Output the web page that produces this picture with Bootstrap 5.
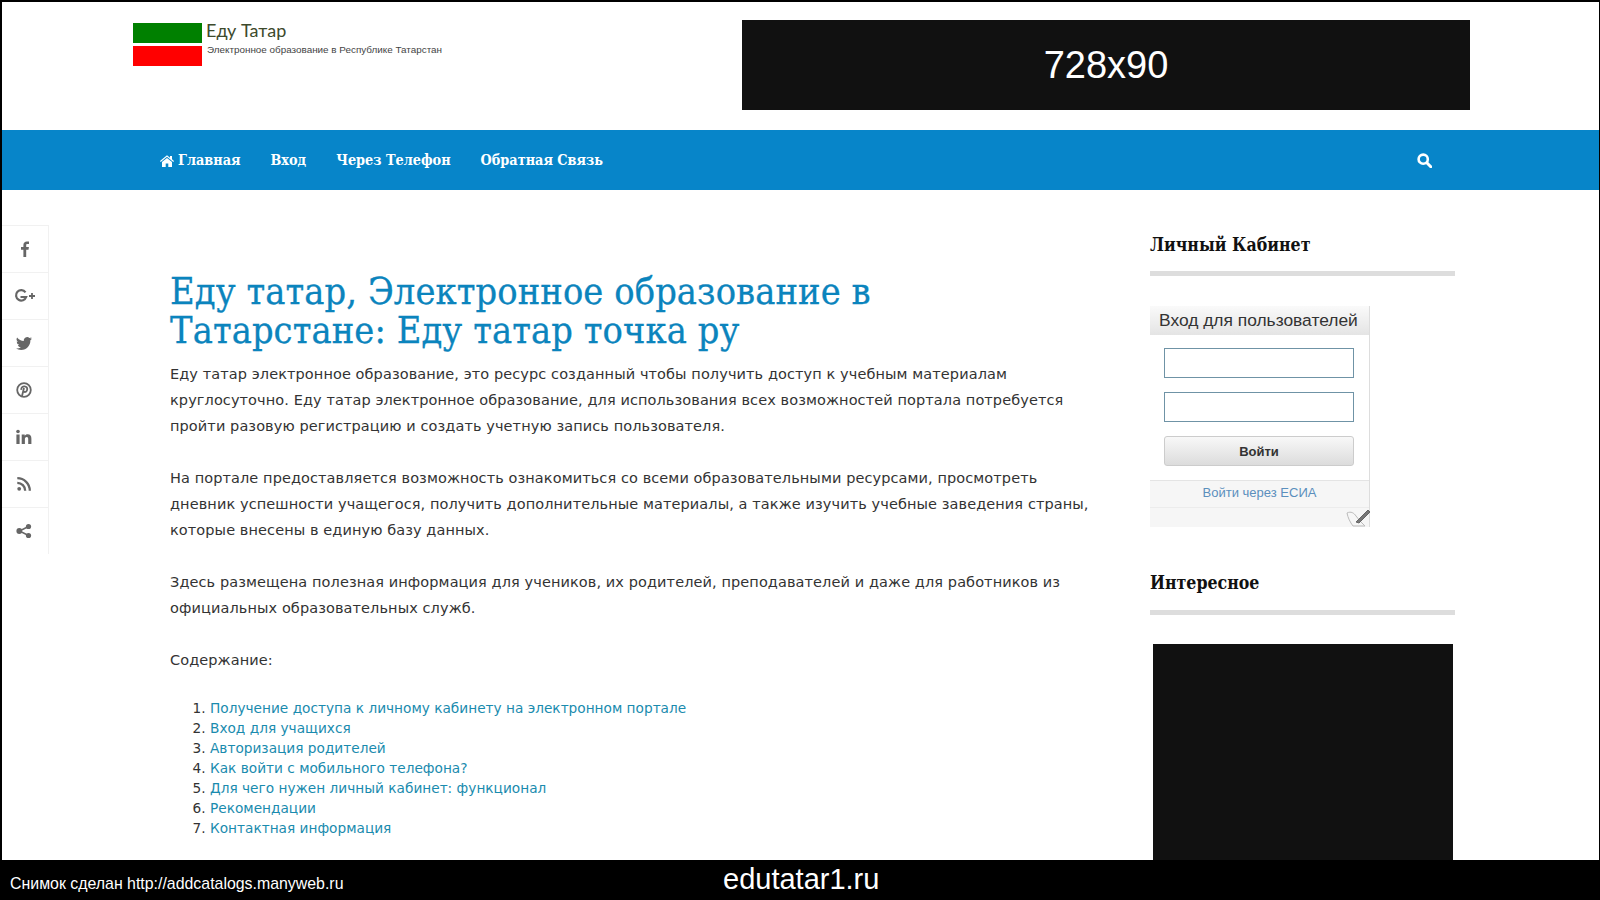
<!DOCTYPE html>
<html lang="ru">
<head>
  <meta charset="UTF-8" />
  <title>Еду Татар</title>
  <meta name="viewport" content="width=device-width, initial-scale=1" />
  <link href="https://cdn.jsdelivr.net/npm/bootstrap@5.3.0/dist/css/bootstrap.min.css" rel="stylesheet"/>
  <style>
    html, body { height: 100%; overflow: hidden; }
    body { background: #000; font-family: "DejaVu Sans", sans-serif; color: #333; }

    .shot-frame { width: 1600px; height: 900px; background: #fff; border-top: 2px solid #000; border-left: 2px solid #000; border-right: 1px solid #000; }
    .slab { font-family: "DejaVu Serif Condensed", "DejaVu Serif", serif; }

    /* шапка */
    .top-head { height: 128px; padding: 18px 129px 0 131px; }
    .flag-logo { width: 69px; height: 43px; margin-top: 3px; background: linear-gradient(#008000 0 20px, #fff 20px 23px, #f00 23px); }
    .logo-title { font-family: Lato, sans-serif; font-size: 18px; line-height: 21px; color: #3d4a2c; margin-left: 4px; }
    .logo-sub { font-family: "Liberation Sans", sans-serif; font-size: 9.9px; line-height: 12px; color: #444; margin: 3px 0 0 5px; }
    .ad-top { width: 728px; height: 90px; background: #111; color: #fff; font-family: "Liberation Sans", sans-serif; font-size: 38px; }

    /* меню */
    .main-menu { height: 60px; background: #0785c9; padding: 1px 167px 0 158px; }
    .main-menu a { color: #fff; font-weight: 700; font-size: 14.3px; text-decoration: none; }
    .menu-gap { gap: 30px; }

    /* контент */
    .page-body { min-height: 0; overflow: hidden; }
    .share-rail { width: 47px; margin-top: 35px; }
    .share-rail div { height: 47px; border: 1px solid #f1f1f1; border-left: 0; border-bottom-width: 0; color: #666; padding-right: 3px; }
    .share-rail div:last-child { border-bottom: 0; }
    .article-col { width: 925px; margin: 82px 0 0 121px; font-size: 14.5px; line-height: 26px; letter-spacing: .09px; color: #333; }
    .article-col h1 { font-size: 37.6px; line-height: 39px; color: #0b84bd; font-weight: 400; margin: 0 0 11px; -webkit-text-stroke: .3px #0b84bd; }
    .article-col p { margin-bottom: 26px; }
    .toc-list { font-size: 13.7px; line-height: 20px; letter-spacing: 0; padding-left: 40px; margin-top: -1px; }
    .toc-list a { color: #1a8bae; text-decoration: none; }

    /* сайдбар */
    .side-col { width: 305px; margin: 0 0 0 55px; }
    .side-col h3 { font-size: 17.6px; line-height: 24px; font-weight: 700; color: #111; margin: 43px 0 0; padding-bottom: 14px; border-bottom: 5px solid #ddd; }
    .side-col h3.next-title { margin-top: 44px; padding-bottom: 15px; }
    .login-box { width: 220px; height: 221px; margin-top: 30px; font-family: "Liberation Sans", sans-serif; border-right: 1px solid #ddd; }
    .login-head { height: 29px; font-size: 17.4px; line-height: 29px; font-weight: 500; color: #333; padding-left: 9px; background: linear-gradient(#fafafa, #e4e4e4); }
    .login-fields { padding: 13px 14px 0; height: 145px; }
    .login-fields input { display: block; width: 190px; height: 30px; border: 1px solid #6f93a6; margin-bottom: 14px; }
    .login-fields button { width: 190px; height: 30px; border: 1px solid #ccc; border-radius: 3px; background: linear-gradient(#f8f8f8, #dcdcdc); color: #333; font-size: 13px; font-weight: 700; padding: 2px 0 0; }
    .login-foot { height: 47px; background: #f6f6f6; border-top: 1px solid #e4e4e4; }
    .login-foot a { display: block; height: 27px; line-height: 23px; text-align: center; font-size: 13px; color: #5b8fbd; text-decoration: none; border-bottom: 1px solid #ececec; }
    .login-pen { position: absolute; right: -2px; bottom: -1px; }
    .ad-side { width: 300px; height: 300px; background: #111; margin: 29px 0 0 3px; }

    /* нижняя полоса */
    .shot-bar { height: 40px; background: #000; color: #fff; font-family: "Liberation Sans", sans-serif; }
    .bar-note { width: 721px; padding: 7px 0 0 8px; font-size: 15.9px; }
    .bar-domain { font-size: 29px; }
  </style>
</head>
<body>
  <div class="shot-frame d-flex flex-column">

    <div class="top-head d-flex justify-content-between flex-shrink-0">
      <div class="d-flex align-items-start">
        <div class="flag-logo"></div>
        <div>
          <div class="logo-title">Еду Татар</div>
          <div class="logo-sub">Электронное образование в Республике Татарстан</div>
        </div>
      </div>
      <div class="ad-top d-flex align-items-center justify-content-center">728x90</div>
    </div>

    <nav class="main-menu d-flex align-items-center justify-content-between slab flex-shrink-0">
      <div class="d-flex menu-gap">
        <a href="#" class="d-flex align-items-center gap-1">
          <svg width="14" height="12" viewBox="0 0 14 12" fill="#fff"><path d="M7 .2 0 6l.7.9L7 1.700l6.300 5.200.7-.9-2-1.700V1h-2v1.700zM2 7v5h3.700V8.500h2.600V12H12V7L7 3z"/></svg>Главная</a>
        <a href="#">Вход</a>
        <a href="#">Через Телефон</a>
        <a href="#">Обратная Связь</a>
      </div>
      <a href="#" aria-label="Поиск">
        <svg width="15" height="15" viewBox="0 0 15 15" fill="none" stroke="#fff" class="d-block"><circle cx="6.200" cy="6.200" r="4.600" stroke-width="2.600"/><path d="m9.800 9.800 4 4" stroke-width="3" stroke-linecap="round"/></svg>
      </a>
    </nav>

    <div class="page-body d-flex flex-grow-1">
      <div class="share-rail flex-shrink-0">
        <div class="d-flex align-items-center justify-content-center">
          <svg width="16" height="16" viewBox="0 0 16 16" fill="#666"><path d="M10.200 16V8.800h2.300l.4-2.800h-2.700V4.300c0-.8.2-1.300 1.400-1.300H13V.6C12.700.6 11.900.5 10.900.5 8.800.5 7.400 1.800 7.400 4.100V6H5v2.800h2.400V16z"/></svg>
        </div>
        <div class="d-flex align-items-center justify-content-center">
          <svg width="24" height="16" viewBox="0 0 24 16" fill="none" stroke="#666"><path d="M13.500 4.300A5.200 5.200 0 1 0 14.200 9H8.500" stroke-width="2.200"/><path d="M17 8h6M20 5v6" stroke-width="1.800"/></svg>
        </div>
        <div class="d-flex align-items-center justify-content-center">
          <svg width="16" height="16" viewBox="0 0 16 16" fill="#666"><path d="M5.026 15c6.038 0 9.341-5.003 9.341-9.334 0-.14 0-.282-.006-.422A6.685 6.685 0 0 0 16 3.542a6.658 6.658 0 0 1-1.889.518 3.301 3.301 0 0 0 1.447-1.817 6.533 6.533 0 0 1-2.087.793A3.286 3.286 0 0 0 7.875 6.030a9.325 9.325 0 0 1-6.767-3.429 3.289 3.289 0 0 0 1.018 4.382A3.323 3.323 0 0 1 .64 6.575v.045a3.288 3.288 0 0 0 2.632 3.218 3.203 3.203 0 0 1-.865.115 3.230 3.230 0 0 1-.614-.057 3.283 3.283 0 0 0 3.067 2.277A6.588 6.588 0 0 1 .78 13.580a6.320 6.320 0 0 1-.78-.045A9.344 9.344 0 0 0 5.026 15z"/></svg>
        </div>
        <div class="d-flex align-items-center justify-content-center">
          <svg width="16" height="16" viewBox="0 0 16 16" fill="none" stroke="#666"><circle cx="8" cy="8" r="6.800" stroke-width="1.800"/><path d="M6 14 8 6M5.300 7.800C5 5.500 6.800 4.300 8.500 4.400c2 .1 3 1.500 2.700 3.300-.3 1.700-1.800 2.800-3.400 2" stroke-width="1.800"/></svg>
        </div>
        <div class="d-flex align-items-center justify-content-center">
          <svg width="16" height="16" viewBox="0 0 16 16" fill="#666"><circle cx="2" cy="2.500" r="1.800"/><path d="M.4 5.500h3.200V15H.4zM5.700 5.500h3v1.300c.5-.9 1.600-1.500 2.900-1.500 2.800 0 3.800 1.700 3.800 4.500V15h-3.200v-5c0-1.300-.4-2.100-1.500-2.100-1.300 0-1.800 1-1.800 2.100v5H5.700z"/></svg>
        </div>
        <div class="d-flex align-items-center justify-content-center">
          <svg width="16" height="16" viewBox="0 0 16 16" fill="none" stroke="#666"><circle cx="3.200" cy="12.800" r="1.900" fill="#666" stroke="none"/><path d="M1.300 6.800a7.900 7.900 0 0 1 7.900 7.900M1.300 2.200a12.500 12.500 0 0 1 12.500 12.500" stroke-width="2.300"/></svg>
        </div>
        <div class="d-flex align-items-center justify-content-center">
          <svg width="16" height="16" viewBox="0 0 16 16" fill="#666" stroke="#666"><path d="M12.500 3.500 3.500 8l9 4.500" fill="none" stroke-width="1.500"/><circle cx="12.500" cy="3.500" r="2.600" stroke="none"/><circle cx="3.300" cy="8" r="2.900" stroke="none"/><circle cx="12.500" cy="12.500" r="2.600" stroke="none"/></svg>
        </div>
      </div>

      <main class="article-col flex-shrink-0">
        <h1 class="slab">Еду татар, Электронное образование в<br>Татарстане: Еду татар точка ру</h1>
        <p>Еду татар электронное образование, это ресурс созданный чтобы получить доступ к учебным материалам круглосуточно. Еду татар электронное образование, для использования всех возможностей портала потребуется пройти разовую регистрацию и создать учетную запись пользователя.</p>
        <p>На портале предоставляется возможность ознакомиться со всеми образовательными ресурсами, просмотреть дневник успешности учащегося, получить дополнительные материалы, а также изучить учебные заведения страны, которые внесены в единую базу данных.</p>
        <p>Здесь размещена полезная информация для учеников, их родителей, преподавателей и даже для работников из официальных образовательных служб.</p>
        <p>Содержание:</p>
        <ol class="toc-list">
          <li><a href="#">Получение доступа к личному кабинету на электронном портале</a></li>
          <li><a href="#">Вход для учащихся</a></li>
          <li><a href="#">Авторизация родителей</a></li>
          <li><a href="#">Как войти с мобильного телефона?</a></li>
          <li><a href="#">Для чего нужен личный кабинет: функционал</a></li>
          <li><a href="#">Рекомендации</a></li>
          <li><a href="#">Контактная информация</a></li>
        </ol>
      </main>

      <aside class="side-col flex-shrink-0">
        <h3 class="slab">Личный Кабинет</h3>
        <div class="login-box position-relative">
          <div class="login-head">Вход для пользователей</div>
          <div class="login-fields">
            <input type="text" aria-label="Логин" />
            <input type="password" aria-label="Пароль" />
            <button type="button">Войти</button>
          </div>
          <div class="login-foot">
            <a href="#">Войти через ЕСИА</a>
          </div>
          <svg class="login-pen" width="26" height="20" viewBox="0 0 26 20" fill="none" stroke="#bbb"><path d="M2 5c4-2 7 0 9 3l4 5 5 5H8C5 14 3 10 2 5z"/><path d="m11 14 12-12 2 2-11 11z" fill="#777" stroke="#666"/></svg>
        </div>
        <h3 class="slab next-title">Интересное</h3>
        <div class="ad-side"></div>
      </aside>
    </div>

    <div class="shot-bar d-flex align-items-center flex-shrink-0">
      <div class="bar-note">Снимок сделан http://addcatalogs.manyweb.ru</div>
      <div class="bar-domain">edutatar1.ru</div>
    </div>
  </div>
  <script src="https://cdn.jsdelivr.net/npm/bootstrap@5.3.0/dist/js/bootstrap.bundle.min.js"></script>
</body>
</html>
